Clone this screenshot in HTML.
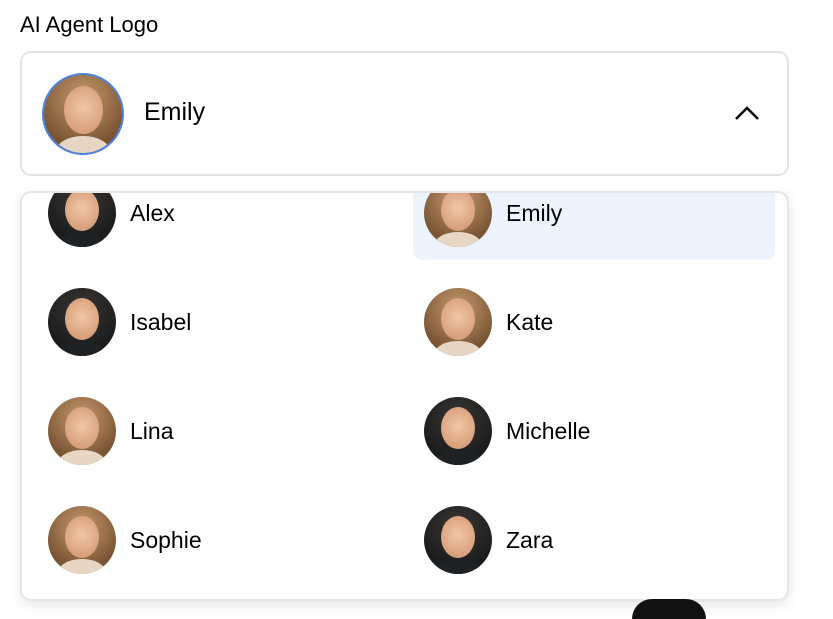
<!DOCTYPE html>
<html><head><style>
*{margin:0;padding:0;box-sizing:border-box}
body{width:833px;height:607px;background:#fff;font-family:"Liberation Sans",sans-serif;position:relative;overflow:hidden;color:#111}
.t{position:absolute;left:20px;top:12px;font-size:22px;color:#000}
.sel{position:absolute;left:20px;top:51px;width:769px;height:125px;border:2px solid #e3e3e3;border-radius:11px}
.av{position:absolute;border-radius:50%;overflow:hidden}
.av::before{content:"";position:absolute;left:25%;top:14%;width:50%;height:62%;border-radius:50%;background:radial-gradient(circle at 50% 45%,#f0c7a8,#d9a07c 70%)}
.av::after{content:"";position:absolute;left:15%;top:78%;width:70%;height:40%;border-radius:50% 50% 0 0;background:#1f2224}
.dark{background:radial-gradient(circle at 50% 30%,#3b3632,#1a1c1d 70%)}
.light{background:radial-gradient(circle at 50% 30%,#c69a6e,#7a5534 70%)}
.light::after{background:#e8d6c4}
.dd{position:absolute;left:20px;top:191px;width:769px;height:410px;border:2px solid #e6e6e6;border-radius:11px;background:#fff;box-shadow:0 4px 12px rgba(0,0,0,.1);overflow:hidden}
.hl{position:absolute;left:391px;top:-2px;width:362px;height:69px;background:#edf4fe;border-radius:0 0 9px 9px}
.n{position:absolute;font-size:23px;line-height:28px;color:#000}
</style></head><body>
<div class="t">AI Agent Logo</div>
<div class="sel">
 <div class="av light" style="left:20px;top:20px;width:82px;height:82px;border:2px solid #4d83dd"></div>
 <div class="n" style="left:122px;top:45px;font-size:25px">Emily</div>
 <svg style="position:absolute;left:711px;top:51px" width="28" height="18" viewBox="0 0 28 18"><path d="M3 15 L14 4 L25 15" fill="none" stroke="#111" stroke-width="2.6"/></svg>
</div>
<div class="dd">
 <div class="hl"></div>
 <div class="av dark" style="left:26px;top:-14px;width:68px;height:68px"></div>
 <div class="n" style="left:108px;top:6px">Alex</div>
 <div class="av light" style="left:402px;top:-14px;width:68px;height:68px"></div>
 <div class="n" style="left:484px;top:6px">Emily</div>
 <div class="av dark" style="left:26px;top:95px;width:68px;height:68px"></div>
 <div class="n" style="left:108px;top:115px">Isabel</div>
 <div class="av light" style="left:402px;top:95px;width:68px;height:68px"></div>
 <div class="n" style="left:484px;top:115px">Kate</div>
 <div class="av light" style="left:26px;top:204px;width:68px;height:68px"></div>
 <div class="n" style="left:108px;top:224px">Lina</div>
 <div class="av dark" style="left:402px;top:204px;width:68px;height:68px"></div>
 <div class="n" style="left:484px;top:224px">Michelle</div>
 <div class="av light" style="left:26px;top:313px;width:68px;height:68px"></div>
 <div class="n" style="left:108px;top:333px">Sophie</div>
 <div class="av dark" style="left:402px;top:313px;width:68px;height:68px"></div>
 <div class="n" style="left:484px;top:333px">Zara</div>
</div>
<div style="position:absolute;left:632px;top:599px;width:74px;height:20px;background:#111;border-radius:20px 20px 0 0"></div>
</body></html>
